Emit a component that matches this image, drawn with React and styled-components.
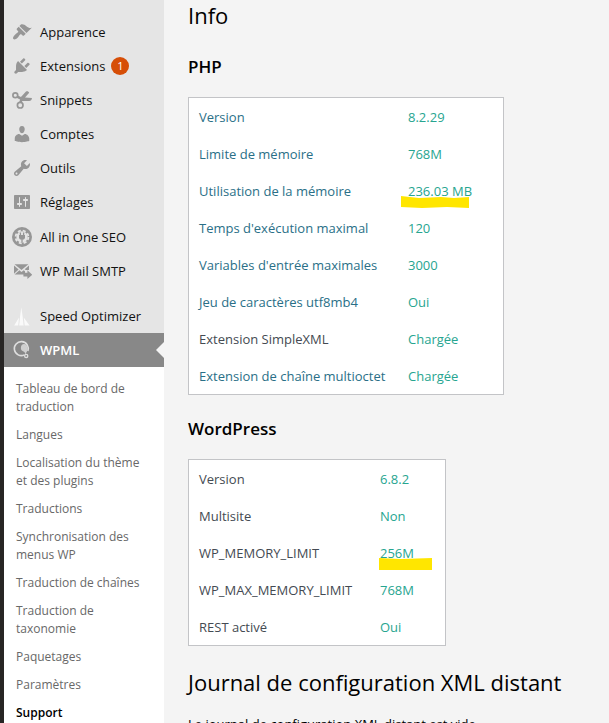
import React, { useState } from 'react';
import styled, { createGlobalStyle } from 'styled-components';

const GlobalStyle = createGlobalStyle`
    * {
        box-sizing: border-box;
    }

    body {
        margin: 0;
        background-color: #f4f4f4;
        color: #000;
        font-family: 'Open Sans', 'Noto Sans', sans-serif;
        font-size: 13px;
    }
`;

const Page = styled.div`
    display: flex;
    height: 100vh;
    overflow: hidden;
    border-left: 4px solid #272524;
`;

const Sidebar = styled.nav`
    width: 160px;
    flex-shrink: 0;
    padding-top: 15px;
    background-color: #e5e5e5;
`;

const MenuList = styled.ul`
    list-style: none;
    margin: 0;
    padding: 0;
`;

const MenuItem = styled.li`
    margin-top: ${({ $space }) => $space || 0}px;
`;

const MenuLink = styled.a`
    position: relative;
    display: flex;
    align-items: center;
    height: 34px;
    padding-left: 8px;
    color: ${({ $active }) => ($active ? '#fff' : '#111')};
    background-color: ${({ $active }) => ($active ? '#888' : 'transparent')};
    font-weight: ${({ $active }) => ($active ? 600 : 400)};
    text-decoration: none;
    white-space: nowrap;

    svg {
        width: 20px;
        height: 20px;
        margin-right: 8px;
        flex-shrink: 0;
    }

    ${({ $active }) => $active && `
        &::after {
            content: '';
            position: absolute;
            right: 0;
            top: 9px;
            border: 8px solid transparent;
            border-right-color: #f4f4f4;
            border-left: 0;
        }
    `}
`;

const Badge = styled.span`
    width: 18px;
    height: 18px;
    margin-left: 6px;
    border-radius: 50%;
    background-color: #d64e07;
    color: #fff;
    font-size: 11px;
    line-height: 18px;
    text-align: center;
`;

const SubMenu = styled.ul`
    list-style: none;
    margin: 0;
    padding: 8px 0;
    background-color: #fff;
`;

const SubLink = styled.a`
    display: block;
    padding: 5px 12px;
    font-size: 12px;
    line-height: 18px;
    text-decoration: none;
    color: ${({ $current }) => ($current ? '#000' : '#686868')};
    font-weight: ${({ $current }) => ($current ? 600 : 400)};
`;

const Content = styled.main`
    flex: 1;
    min-width: 0;
    padding: 0 24px;
`;

const Title = styled.h2`
    margin: 0;
    padding-bottom: 3px;
    font-size: 22px;
    font-weight: 400;
    line-height: 30px;
    white-space: nowrap;
`;

const SectionTitle = styled.h3`
    margin: 21px 0 18px;
    font-size: 17px;
    font-weight: 600;
    line-height: 25px;
`;

const InfoTable = styled.table`
    border: 1px solid #c3c4c7;
    border-spacing: 0;
    background-color: #fff;
    margin-bottom: 21px;
`;

const Label = styled.th`
    height: 37px;
    min-width: ${({ $width }) => $width}px;
    padding: 0 10px;
    color: ${({ $linked }) => ($linked ? '#2a6f87' : '#444a52')};
    font-weight: 400;
    text-align: left;
    white-space: nowrap;
`;

const Value = styled.td`
    padding: 0 31px 0 10px;
    color: #27a590;
    white-space: nowrap;
`;

const Marked = styled.span`
    position: relative;

    svg {
        position: absolute;
        left: -7px;
        top: 14px;
    }
`;

const Note = styled.p`
    margin: 14px 0 0;
    line-height: 20px;
`;

const PATHS = {
    brush: 'M14.48 11.06L7.41 3.99l1.5-1.5c.5-.56 2.3-.47 3.51.32 1.21.8 1.43 1.28 2.91 2.1 1.18.64 2.45 1.26 4.45.85zm-.71.71L6.7 4.7 4.93 6.47c-.39.39-.39 1.02 0 1.41l1.06 1.06c.39.39.39 1.03 0 1.42-.6.6-1.43 1.11-2.21 1.69-.35.26-.7.53-1.01.84C1.43 14.23.4 16.08 1.4 17.07c.99 1 2.84-.03 4.18-1.36.31-.31.58-.66.85-1.02.57-.78 1.08-1.61 1.69-2.21.39-.39 1.02-.39 1.41 0l1.06 1.06c.39.39 1.02.39 1.41 0z',
    plug: 'M13.11 4.36L9.87 7.6 8 5.73l3.24-3.24c.35-.34 1.05-.2 1.56.32.52.51.66 1.21.31 1.55zm-8 1.77l.91-1.12 9.01 9.01-1.19.84c-.71.71-2.63 1.16-3.82 1.16H6.14L4.9 17.26c-.59.59-1.54.59-2.12 0-.59-.58-.59-1.53 0-2.12l1.24-1.24v-3.88c0-1.13.4-3.19 1.09-3.89zm7.26 3.97l3.24-3.24c.34-.35 1.04-.21 1.55.31.52.51.66 1.21.31 1.55l-3.24 3.25z',
    user: 'M10 9.25c-2.27 0-2.73-3.44-2.73-3.44C7 4.02 7.82 2 9.97 2c2.16 0 2.98 2.02 2.71 3.81 0 0-.41 3.44-2.68 3.44zm0 2.57L12.72 10c2.39 0 4.52 2.33 4.52 4.53v2.49s-3.65 1.13-7.24 1.13c-3.65 0-7.24-1.13-7.24-1.13v-2.49c0-2.25 1.94-4.48 4.47-4.48z',
    wrench: 'M16.68 9.77c-1.34 1.34-3.3 1.67-4.95.99l-5.41 6.52c-.99.99-2.59.99-3.58 0s-.99-2.59 0-3.57l6.52-5.42c-.68-1.65-.35-3.61.99-4.95 1.28-1.28 3.12-1.62 4.72-1.06l-2.89 2.89 2.82 2.82 2.86-2.87c.53 1.58.18 3.39-1.08 4.65zM3.81 16.21c.4.39 1.04.39 1.43 0 .4-.4.4-1.04 0-1.43-.39-.4-1.03-.4-1.43 0-.39.39-.39 1.03 0 1.43z',
    settings: 'M18 16V4c0-.55-.45-1-1-1H3c-.55 0-1 .45-1 1v12c0 .55.45 1 1 1h14c.55 0 1-.45 1-1zM8 11h1c.55 0 1 .45 1 1s-.45 1-1 1H8v1.5c0 .28-.22.5-.5.5s-.5-.22-.5-.5V13H6c-.55 0-1-.45-1-1s.45-1 1-1h1V5.5c0-.28.22-.5.5-.5s.5.22.5.5V11zm5-2h-1c-.55 0-1-.45-1-1s.45-1 1-1h1V5.5c0-.28.22-.5.5-.5s.5.22.5.5V7h1c.55 0 1 .45 1 1s-.45 1-1 1h-1v5.5c0 .28-.22.5-.5.5s-.5-.22-.5-.5V9z',
};

const DashIcon = ({ name }) => (
    <svg viewBox="0 0 20 20" fill="#969696" aria-hidden="true">
        <path d={PATHS[name]} />
    </svg>
);

const ScissorsIcon = () => (
    <svg viewBox="0 0 20 20" fill="none" stroke="#969696" aria-hidden="true">
        <circle cx="3.3" cy="5.2" r="2.4" strokeWidth="1.7" />
        <circle cx="8.2" cy="15.2" r="2.8" strokeWidth="1.7" />
        <path d="M5.2 6.6L10 9M8.4 12.6L9.8 8.6" strokeWidth="2.6" />
        <path d="M7.8 8.2L14 1.6c1-.9 2.8-.2 3.2 1.2L13 7.6l6.9.3c.2 1.7-1 3.2-2.8 3.2L8.8 11z" fill="#969696" stroke="none" />
    </svg>
);

const SeoIcon = () => (
    <svg viewBox="0 0 20 20" aria-hidden="true">
        <circle cx="10" cy="10" r="10" fill="#969696" />
        <circle cx="10" cy="10" r="6.4" fill="none" stroke="#e5e5e5" strokeWidth="1.8" strokeDasharray="3 2.03" />
        <circle cx="10" cy="10" r="5.7" fill="#e5e5e5" />
        <path d="M8.4 5.6v3M11.6 5.6v3M10 11v4.8" stroke="#969696" strokeWidth="1.3" />
        <path d="M7 8h6v2.2c0 1.4-1 2.3-2 2.3H9c-1 0-2-.9-2-2.3z" fill="#969696" />
    </svg>
);

const MailIcon = () => (
    <svg viewBox="0 0 20 20" aria-hidden="true">
        <path d="M2.6 3.2h13.8L9.5 9zM2 4.4l4.6 4.1L2 12.8zM17 4.4v4.6h-3.2l-1.1-.7zM7.4 9.3l2.1 1.6 2.2-1.7 1.3 1v3.4H2.6z" fill="#969696" />
        <path d="M11.4 11.8h4V9.2l4.9 4.5-4.9 4.4v-2.6h-4z" fill="#969696" />
    </svg>
);

const RocketIcon = () => (
    <svg viewBox="0 0 20 20" fill="#fafafa" aria-hidden="true">
        <path d="M9.3 1.2l1.3 9 1 9.2H7.2l.9-9.2z" />
        <path d="M7 11.6l-.8 7.8H2.2zM11.8 11.6l.9 7.8h4.8z" />
    </svg>
);

const WpmlIcon = () => (
    <svg viewBox="0 0 20 20" fill="none" aria-hidden="true">
        <path d="M12.4 14.9A7 7 0 1 1 15.9 11" stroke="#dedede" strokeWidth="1.6" />
        <path d="M9.6 5.2c1.2-1.5 3.5-1.6 4.9-.2 1.6 1.8 1.6 4.4.6 6.3-.6 1-1.2 1.6-1.2 3.1-.8-.6-.9-1.7-1.6-2.4-.9-.8-2.6-.9-3.1-2.3-.5-1.5-.4-3.3.4-4.5z" fill="#cfcfcf" />
        <circle cx="14.2" cy="15.9" r="1.6" stroke="#dedede" strokeWidth="1.3" />
    </svg>
);

const MENU = [
    { label: 'Apparence', icon: <DashIcon name="brush" /> },
    { label: 'Extensions', icon: <DashIcon name="plug" />, count: 1 },
    { label: 'Snippets', icon: <ScissorsIcon /> },
    { label: 'Comptes', icon: <DashIcon name="user" /> },
    { label: 'Outils', icon: <DashIcon name="wrench" /> },
    { label: 'Réglages', icon: <DashIcon name="settings" /> },
    { label: 'All in One SEO', icon: <SeoIcon />, space: 1 },
    { label: 'WP Mail SMTP', icon: <MailIcon /> },
    { label: 'Speed Optimizer', icon: <RocketIcon />, space: 11 },
    { label: 'WPML', icon: <WpmlIcon />, active: true },
];

const SUBMENU = [
    'Tableau de bord de traduction',
    'Langues',
    'Localisation du thème et des plugins',
    'Traductions',
    'Synchronisation des menus WP',
    'Traduction de chaînes',
    'Traduction de taxonomie',
    'Paquetages',
    'Paramètres',
    'Support',
];

const PHP_ROWS = [
    { label: 'Version', value: '8.2.29', linked: true },
    { label: 'Limite de mémoire', value: '768M', linked: true },
    { label: 'Utilisation de la mémoire', value: '236.03 MB', linked: true, mark: 'M0 0L18 2l22-1 13 1 15-1v11l-22-1-25 1L0 11z' },
    { label: "Temps d'exécution maximal", value: '120', linked: true },
    { label: "Variables d'entrée maximales", value: '3000', linked: true },
    { label: 'Jeu de caractères utf8mb4', value: 'Oui', linked: true },
    { label: 'Extension SimpleXML', value: 'Chargée' },
    { label: 'Extension de chaîne multioctet', value: 'Chargée', linked: true },
];

const WP_ROWS = [
    { label: 'Version', value: '6.8.2' },
    { label: 'Multisite', value: 'Non' },
    { label: 'WP_MEMORY_LIMIT', value: '256M', mark: 'M6 0l22 1 31-1v12H6z' },
    { label: 'WP_MAX_MEMORY_LIMIT', value: '768M' },
    { label: 'REST activé', value: 'Oui' },
];

const InfoRows = ({ rows, labelWidth }) => (
    <InfoTable>
        <tbody>
            {rows.map((row) => (
                <tr key={row.label}>
                    <Label scope="row" $linked={row.linked} $width={labelWidth}>{row.label}</Label>
                    <Value>
                        {row.mark ? (
                            <Marked>
                                {row.value}
                                <svg width="72" height="13" aria-hidden="true">
                                    <path d={row.mark} fill="#ffe600" />
                                </svg>
                            </Marked>
                        ) : row.value}
                    </Value>
                </tr>
            ))}
        </tbody>
    </InfoTable>
);

const App = () => {
    const [current, setCurrent] = useState('Support');

    return (
        <Page>
            <GlobalStyle />
            <Sidebar>
                <MenuList>
                    {MENU.map((item) => (
                        <MenuItem key={item.label} $space={item.space}>
                            <MenuLink href="#" $active={item.active}>
                                {item.icon}
                                {item.label}
                                {item.count && <Badge>{item.count}</Badge>}
                            </MenuLink>
                        </MenuItem>
                    ))}
                </MenuList>
                <SubMenu>
                    {SUBMENU.map((label) => (
                        <li key={label}>
                            <SubLink
                                href="#"
                                $current={current === label}
                                onClick={() => setCurrent(label)}
                            >
                                {label}
                            </SubLink>
                        </li>
                    ))}
                </SubMenu>
            </Sidebar>
            <Content>
                <Title>Info</Title>
                <SectionTitle>PHP</SectionTitle>
                <InfoRows rows={PHP_ROWS} labelWidth={209} />
                <SectionTitle>WordPress</SectionTitle>
                <InfoRows rows={WP_ROWS} labelWidth={181} />
                <Title>Journal de configuration XML distant</Title>
                <Note>Le journal de configuration XML distant est vide.</Note>
            </Content>
        </Page>
    );
};

export default App;
